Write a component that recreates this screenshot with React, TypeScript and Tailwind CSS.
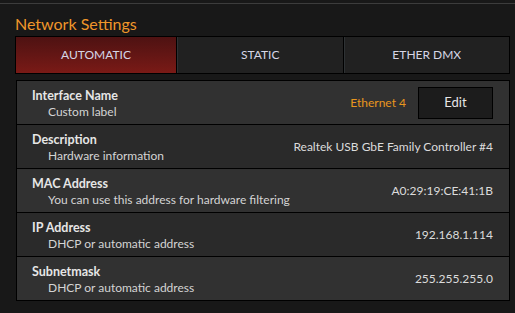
import React from 'react';

const font = { fontFamily: 'Lato, "Noto Sans", sans-serif' };

type Row = { title: string; sub: string; value: string; accent?: boolean; edit?: boolean };

const rows: Row[] = [
  { title: 'Interface Name', sub: 'Custom label', value: 'Ethernet 4', accent: true, edit: true },
  { title: 'Description', sub: 'Hardware information', value: 'Realtek USB GbE Family Controller #4' },
  { title: 'MAC Address', sub: 'You can use this address for hardware filtering', value: 'A0:29:19:CE:41:1B' },
  { title: 'IP Address', sub: 'DHCP or automatic address', value: '192.168.1.114' },
  { title: 'Subnetmask', sub: 'DHCP or automatic address', value: '255.255.255.0' },
];

const tabs = ['AUTOMATIC', 'STATIC', 'ETHER DMX'];

export default function App() {
  return (
    <div className="w-[515px] h-[313px] bg-[#181818] overflow-hidden pt-[3px]" style={font}>
      <div className="h-px bg-[#3c3c3c]" />
      <div className="pl-[15px] pr-[5px]">
        <h1 className="text-[16px] leading-[22px] text-[#f0962a] mt-[9px] h-[23px]">Network Settings</h1>

        {/* Mode tabs */}
        <div className="flex h-[38px] border border-black bg-black gap-px">
          {tabs.map((t, i) => (
            <div
              key={t}
              className={
                i === 0
                  ? 'w-[160px] flex items-center justify-center text-[12px] text-[#d6d6e6] bg-gradient-to-b from-[#4e1212] to-[#7a1a16]'
                  : 'flex-1 flex items-center justify-center text-[12px] text-[#d6d6e6] bg-[#212121] border-l border-[#2e3234]'
              }
            >
              {t}
            </div>
          ))}
        </div>

        {/* Properties */}
        <div className="mt-[6px] ml-px border border-black bg-black flex flex-col gap-px">
          {rows.map((r, i) => (
            <div
              key={r.title}
              className={`h-[43px] flex items-center pl-[15px] pr-[16px] ${i % 2 === 0 ? 'bg-[#313131]' : 'bg-[#2a2a2a]'}`}
            >
              <div className="flex-1 flex flex-col justify-center pt-[2px]">
                <div className="text-[12.5px] leading-[16px] font-bold text-[#e6e6e6]">{r.title}</div>
                <div className="text-[12px] leading-[16px] text-[#d4d4d4] pl-[16px]">{r.sub}</div>
              </div>
              <div className={`text-[12px] ${r.accent ? 'text-[#e8961e]' : 'text-[#dcdcdc]'}`}>{r.value}</div>
              {r.edit && (
                <button className="ml-[12px] w-[75px] h-[32px] bg-[#1c1c1c] border border-black text-[13px] text-[#e6e6e6]">
                  Edit
                </button>
              )}
            </div>
          ))}
        </div>
      </div>
    </div>
  );
}
